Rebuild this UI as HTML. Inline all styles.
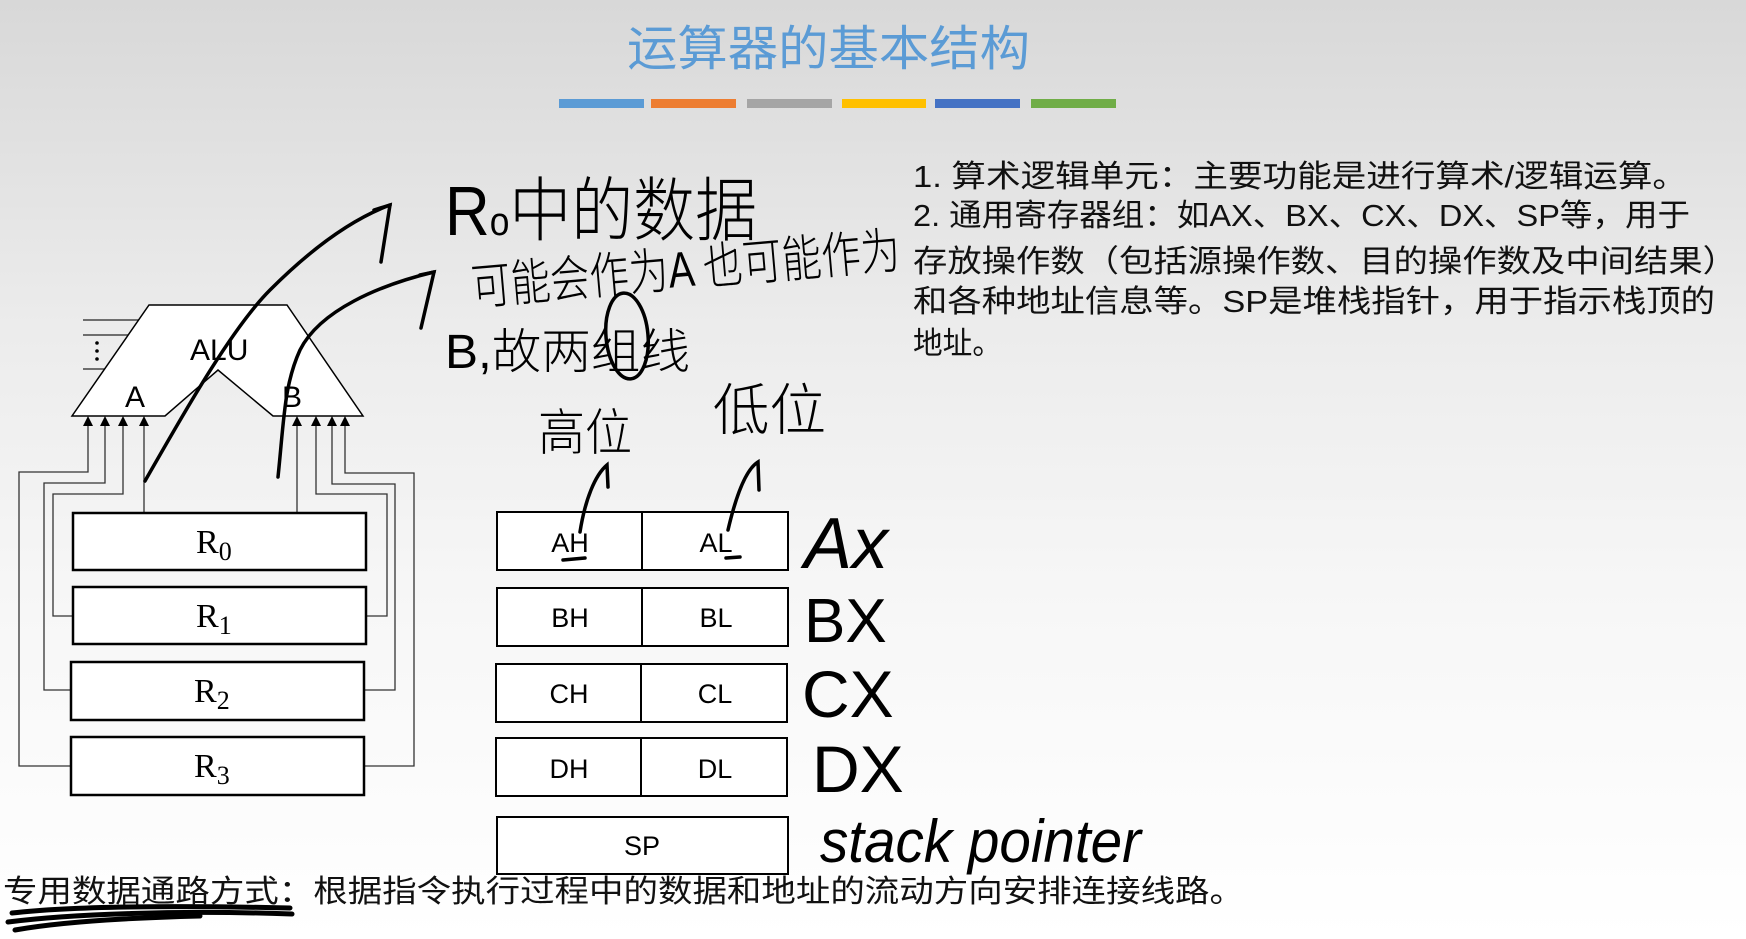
<!DOCTYPE html>
<html><head><meta charset="utf-8"><style>
html,body{margin:0;padding:0;}
body{width:1746px;height:939px;overflow:hidden;background:linear-gradient(#d8d8d8 0%,#ececec 35%,#f7f7f7 65%,#ffffff 100%);}
svg{display:block}
.cn{font-family:"Liberation Sans","Noto Sans CJK SC",sans-serif;}
.hw{font-family:"Liberation Sans","Noto Sans CJK SC",sans-serif;font-weight:300;fill:#000;}
</style></head><body>
<svg width="1746" height="939" viewBox="0 0 1746 939" xmlns="http://www.w3.org/2000/svg">
<text class="cn" x="627" y="65" font-size="48" fill="#5b9bd5" textLength="403" lengthAdjust="spacingAndGlyphs">运算器的基本结构</text>
<rect x="559" y="99" width="85" height="9" fill="#5b9bd5"/>
<rect x="651" y="99" width="85" height="9" fill="#ed7d31"/>
<rect x="747" y="99" width="85" height="9" fill="#a5a5a5"/>
<rect x="842" y="99" width="84" height="9" fill="#ffc000"/>
<rect x="935" y="99" width="85" height="9" fill="#4472c4"/>
<rect x="1031" y="99" width="85" height="9" fill="#70ad47"/>

<g class="cn" font-size="31" fill="#111">
<text x="913" y="187" textLength="774" lengthAdjust="spacingAndGlyphs">1. 算术逻辑单元：主要功能是进行算术/逻辑运算。</text>
<text x="913" y="226" textLength="777" lengthAdjust="spacingAndGlyphs">2. 通用寄存器组：如AX、BX、CX、DX、SP等，用于</text>
<text x="913" y="272" textLength="824" lengthAdjust="spacingAndGlyphs">存放操作数（包括源操作数、目的操作数及中间结果）</text>
<text x="913" y="312" textLength="802" lengthAdjust="spacingAndGlyphs">和各种地址信息等。SP是堆栈指针，用于指示栈顶的</text>
<text x="913" y="354" textLength="89" lengthAdjust="spacingAndGlyphs">地址。</text>
</g>

<g stroke="#000" fill="none" stroke-width="1.5">
<line x1="83" y1="320" x2="145" y2="320" stroke="#444"/>
<line x1="83" y1="335" x2="135" y2="335" stroke="#444"/>
<line x1="83" y1="369" x2="110" y2="369" stroke="#444"/>
<path d="M149,305 L287,305 L363,416 L273,416 L218,370 L165,416 L72,416 Z" fill="#fff"/>
</g>
<circle cx="97" cy="343" r="1.8" fill="#000"/><circle cx="97" cy="351" r="1.8" fill="#000"/><circle cx="97" cy="359" r="1.8" fill="#000"/>
<g class="cn" font-size="30" fill="#000">
<text x="190" y="360">ALU</text>
<text x="125" y="407">A</text>
<text x="282" y="407">B</text>
</g>
<g stroke="#333" fill="none" stroke-width="1.3">
<path d="M88,424 V472 H19 V766 H72"/>
<path d="M105,424 V483 H44 V690 H72"/>
<path d="M123,424 V494 H53 V616 H74"/>
<path d="M144,424 V513"/>
<path d="M297,424 V513"/>
<path d="M316,424 V494 H387 V616 H366"/>
<path d="M332,424 V484 H395 V690 H364"/>
<path d="M345,424 V473 H414 V766 H364"/>
</g>
<g fill="#000">
<path d="M88,416 l-5,10 h10z"/><path d="M105,416 l-5,10 h10z"/><path d="M123,416 l-5,10 h10z"/><path d="M144,416 l-5,10 h10z"/>
<path d="M297,416 l-5,10 h10z"/><path d="M316,416 l-5,10 h10z"/><path d="M332,416 l-5,10 h10z"/><path d="M345,416 l-5,10 h10z"/>
</g>
<g stroke="#000" stroke-width="2.5" fill="#fff">
<rect x="73" y="513" width="293" height="57"/>
<rect x="73" y="587" width="293" height="57"/>
<rect x="71" y="662" width="293" height="58"/>
<rect x="71" y="737" width="293" height="58"/>
</g>
<g font-family="Liberation Serif,serif" font-size="34" fill="#000">
<text x="196" y="553">R<tspan font-size="26" dy="7">0</tspan></text>
<text x="196" y="627">R<tspan font-size="26" dy="7">1</tspan></text>
<text x="194" y="702">R<tspan font-size="26" dy="7">2</tspan></text>
<text x="194" y="777">R<tspan font-size="26" dy="7">3</tspan></text>
</g>

<g stroke="#000" stroke-width="2" fill="#fff">
<rect x="497" y="512" width="291" height="58"/><line x1="642" y1="512" x2="642" y2="570"/>
<rect x="497" y="588" width="291" height="58"/><line x1="642" y1="588" x2="642" y2="646"/>
<rect x="496" y="664" width="291" height="58"/><line x1="641" y1="664" x2="641" y2="722"/>
<rect x="496" y="738" width="291" height="58"/><line x1="641" y1="738" x2="641" y2="796"/>
<rect x="497" y="817" width="291" height="57"/>
</g>
<g class="cn" font-size="27" fill="#000" text-anchor="middle">
<text x="570" y="552">AH</text><text x="716" y="552">AL</text>
<text x="570" y="627">BH</text><text x="716" y="627">BL</text>
<text x="569" y="703">CH</text><text x="715" y="703">CL</text>
<text x="569" y="778">DH</text><text x="715" y="778">DL</text>
<text x="642" y="855">SP</text>
</g>

<text class="cn" x="3" y="902" font-size="31" fill="#111" textLength="1241" lengthAdjust="spacingAndGlyphs">专用数据通路方式：根据指令执行过程中的数据和地址的流动方向安排连接线路。</text>
<g stroke="#000" stroke-width="5" fill="none" stroke-linecap="round">
<path d="M12,913 C80,905 200,906 290,908"/>
<path d="M8,922 C70,914 180,910 292,914"/>
<path d="M15,930 C60,922 120,918 200,916"/>
</g>

<g fill="none" stroke="#000" stroke-width="3.5" stroke-linecap="round">
<path d="M145,481 C180,420 230,330 270,290 C310,250 350,220 390,205"/>
<path d="M374,210 L390,205 L381,262"/>
<path d="M278,477 C284,420 284,385 300,350 C320,310 380,285 434,272"/>
<path d="M420,275 L434,272 L421,328"/>
<path d="M580,532 C585,500 595,475 607,465 L608,487"/>
<path d="M728,530 C735,500 745,470 758,462 L759,490"/>
<ellipse cx="627" cy="336" rx="21" ry="43" transform="rotate(-5 627 336)"/>
<path d="M563,560 L585,558"/><path d="M726,558 L740,557"/>
</g>
<g class="hw">
<text x="445" y="235" font-size="70" textLength="312" lengthAdjust="spacingAndGlyphs">R<tspan font-size="40">o</tspan>中的数据</text>
<text x="473" y="305" font-size="50" transform="rotate(-5 473 305)" textLength="430" lengthAdjust="spacingAndGlyphs">可能会作为A 也可能作为</text>
<text x="445" y="368" font-size="48" textLength="245" lengthAdjust="spacingAndGlyphs">B,故两组线</text>
<text x="538" y="450" font-size="50" textLength="94" lengthAdjust="spacingAndGlyphs">高位</text>
<text x="713" y="430" font-size="56" textLength="113" lengthAdjust="spacingAndGlyphs">低位</text>
<text x="804" y="568" font-size="72" font-style="italic" font-weight="300">Ax</text>
<text x="804" y="642" font-size="62" font-weight="300">BX</text>
<text x="802" y="717" font-size="66" font-weight="300">CX</text>
<text x="812" y="792" font-size="66" font-weight="300">DX</text>
<text x="820" y="862" font-size="60" font-style="italic" textLength="321" lengthAdjust="spacingAndGlyphs">stack pointer</text>
</g>
</svg>
</body></html>
